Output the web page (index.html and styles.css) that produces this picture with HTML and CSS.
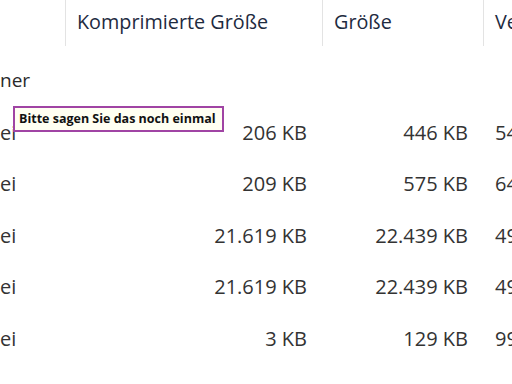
FILE: index.html
```html
<!DOCTYPE html>
<html lang="de">
<head>
<meta charset="utf-8">
<link rel="stylesheet" href="styles.css">
</head>
<body>
<div class="view">
  <div class="grid header">
    <div class="hcell first"></div>
    <div class="hcell">Komprimierte Größe</div>
    <div class="hcell">Größe</div>
    <div class="hcell">Verhältnis</div>
  </div>
  <div class="group">ner</div>
  <div class="grid row">
    <div class="cell name">ei</div>
    <div class="cell num">206 KB</div>
    <div class="cell num">446 KB</div>
    <div class="cell pct">54%</div>
  </div>
  <div class="grid row">
    <div class="cell name">ei</div>
    <div class="cell num">209 KB</div>
    <div class="cell num">575 KB</div>
    <div class="cell pct">64%</div>
  </div>
  <div class="grid row">
    <div class="cell name">ei</div>
    <div class="cell num">21.619 KB</div>
    <div class="cell num">22.439 KB</div>
    <div class="cell pct">49%</div>
  </div>
  <div class="grid row">
    <div class="cell name">ei</div>
    <div class="cell num">21.619 KB</div>
    <div class="cell num">22.439 KB</div>
    <div class="cell pct">49%</div>
  </div>
  <div class="grid row">
    <div class="cell name">ei</div>
    <div class="cell num">3 KB</div>
    <div class="cell num">129 KB</div>
    <div class="cell pct">99%</div>
  </div>
  <div class="tooltip">Bitte sagen Sie das noch einmal</div>
</div>
</body>
</html>
```
FILE: styles.css
```css
html, body {
  margin: 0;
  padding: 0;
  background: #ffffff;
}
body {
  width: 512px;
  height: 384px;
  overflow: hidden;
  font-family: "Open Sans", "Noto Sans", sans-serif;
}
.view {
  position: relative;
  width: 512px;
  height: 384px;
  overflow: hidden;
}
.grid {
  display: grid;
  grid-template-columns: 65px 257px 161px 200px;
  width: 683px;
}
.header {
  height: 46px;
}
.hcell {
  border-left: 1px solid #e3e3e3;
  padding-left: 11px;
  font-size: 19.8px;
  line-height: 44px;
  color: #1e2b3f;
  white-space: nowrap;
}
.hcell.first {
  border-left: none;
}
.group {
  margin-top: 9px;
  height: 51px;
  line-height: 51px;
  font-size: 19px;
  color: #2a2a2a;
}
.row {
  height: 51.4px;
  line-height: 53px;
  font-size: 20px;
  color: #333333;
}
.cell {
  white-space: nowrap;
}
.num {
  text-align: right;
  padding-right: 15px;
}
.pct {
  padding-left: 12px;
}
.tooltip {
  position: absolute;
  left: 13px;
  top: 106px;
  width: 203px;
  height: 22px;
  border: 2px solid #a044a4;
  background: #fffff2;
  font-size: 12.5px;
  font-weight: 700;
  line-height: 22px;
  padding-left: 4px;
  color: #111111;
  white-space: nowrap;
}
```
